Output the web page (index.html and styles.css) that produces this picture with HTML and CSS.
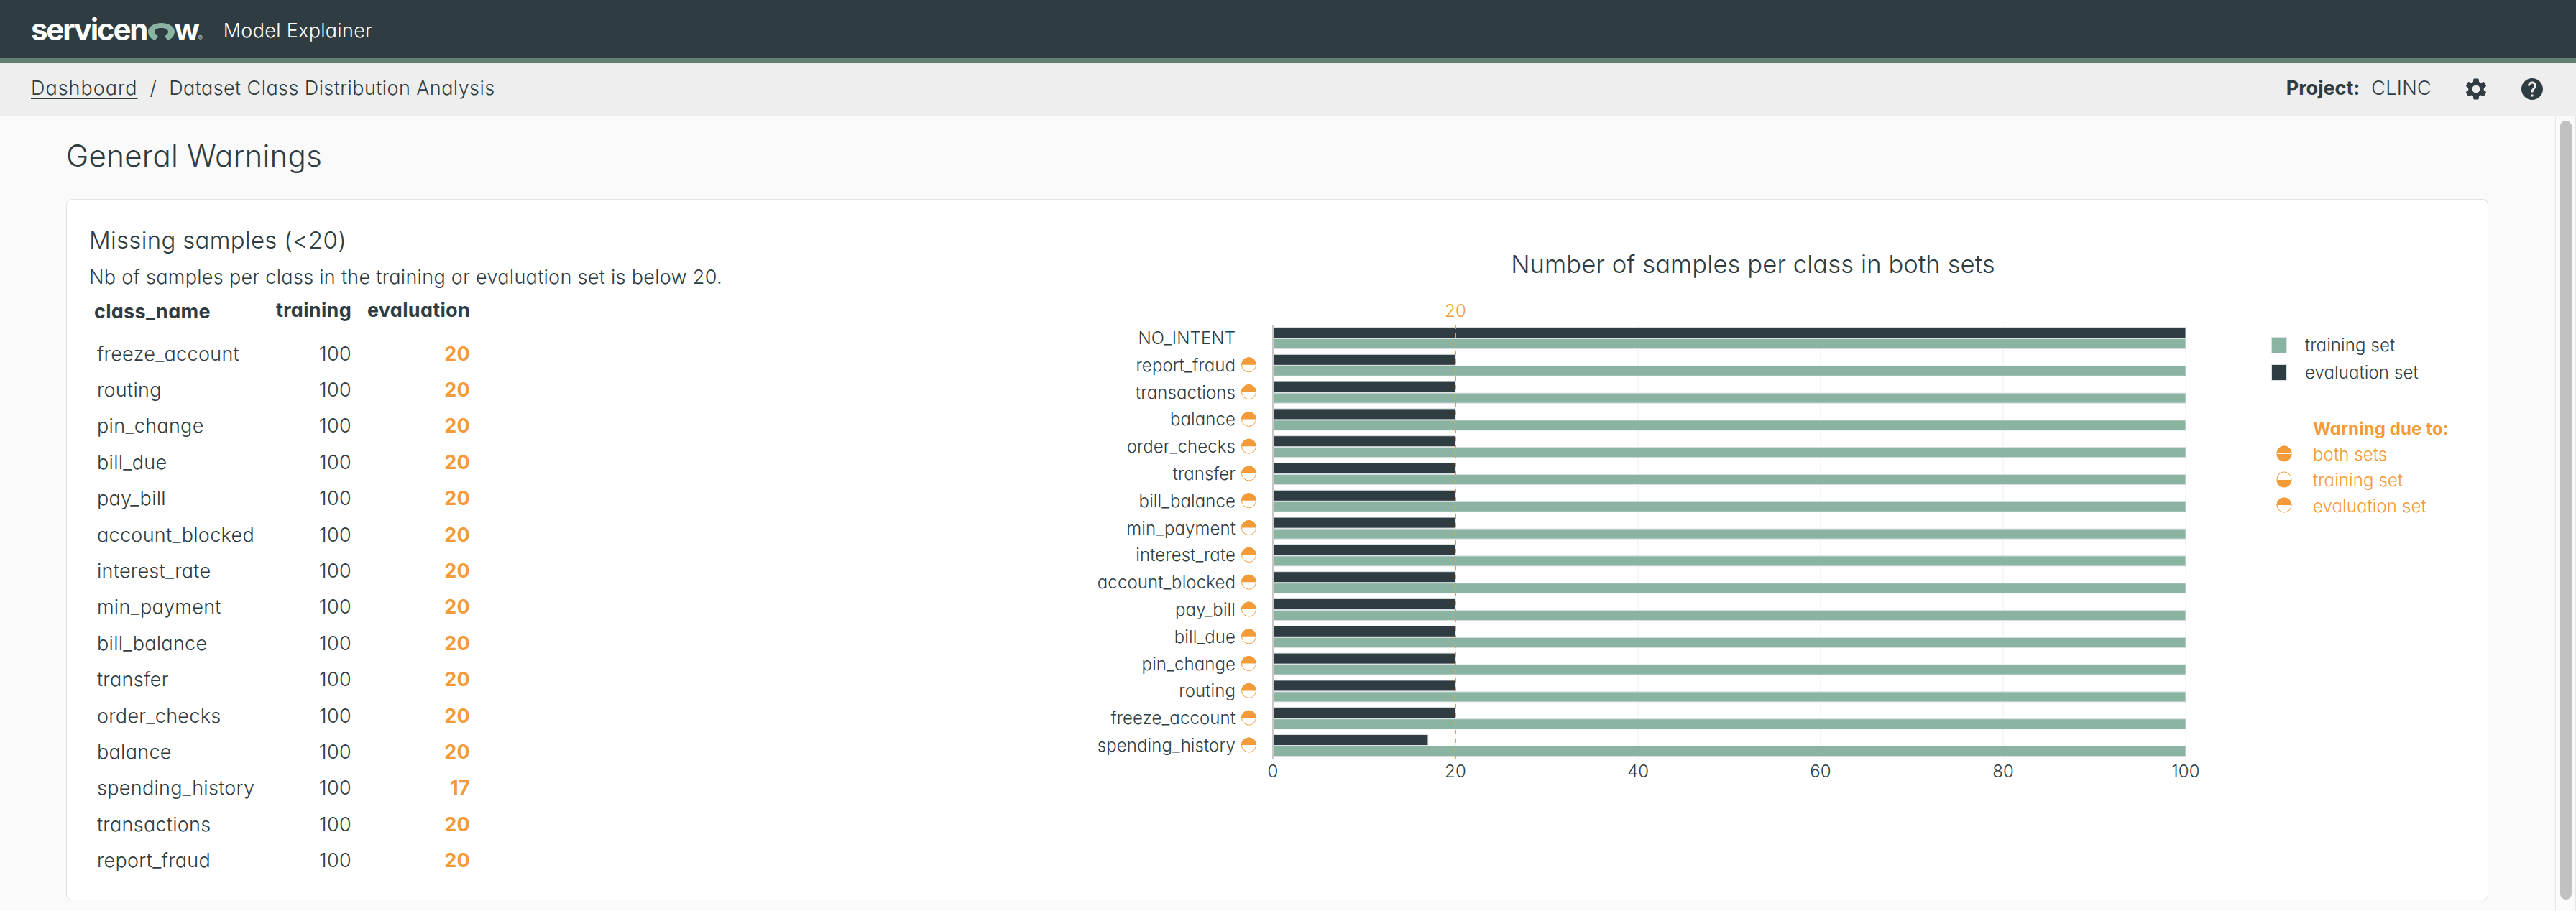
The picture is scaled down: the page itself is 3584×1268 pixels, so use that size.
FILE: index.html
```html
<!DOCTYPE html>
<html lang="en">

<head>
    <meta charset="UTF-8">
    <meta name="viewport" content="width=device-width, initial-scale=1.0">
    <title>Model Explainer</title>
    <link rel="stylesheet" href="styles.css">
</head>

<body>
    <header class="topbar">
        <div class="logo">
            <span>servicen</span>
            <svg class="logo-o" viewBox="0 0 37 24">
                <path d="M10 24C3 22 0 17 0 12 0 5 8 0 18.5 0S37 5 37 12c0 5-3 10-10 12l-4-6c3-1 5-3 5-6 0-3-4-5-9.500-5S9 9 9 12c0 3 2 5 5 6z" />
            </svg>
            <span>w</span>
            <span class="logo-mark">®</span>
        </div>
        <span class="app-name">Model Explainer</span>
    </header>

    <nav class="crumbs">
        <a href="#" class="crumb-link">Dashboard</a>
        <span class="crumb-sep">/</span>
        <span class="crumb-page">Dataset Class Distribution Analysis</span>
        <div class="project">
            <b>Project:</b>
            <span class="project-name">CLINC</span>
            <svg class="icon icon-gear" viewBox="0 0 24 24">
                <path d="M19.14 12.94c.04-.3.06-.61.06-.94 0-.32-.02-.64-.07-.94l2.03-1.58a.49.49 0 0 0 .12-.61l-1.92-3.32a.488.488 0 0 0-.59-.22l-2.39.96c-.5-.38-1.03-.7-1.62-.94l-.36-2.54a.484.484 0 0 0-.48-.41h-3.84c-.24 0-.43.17-.47.41l-.36 2.54c-.59.24-1.13.57-1.62.94l-2.39-.96c-.22-.08-.47 0-.59.22L2.74 8.87c-.12.21-.08.47.12.61l2.03 1.58c-.05.3-.09.63-.09.94s.02.64.07.94l-2.03 1.58a.49.49 0 0 0-.12.61l1.92 3.32c.12.22.37.29.59.22l2.39-.96c.5.38 1.03.7 1.62.94l.36 2.54c.05.24.24.41.48.41h3.84c.24 0 .44-.17.47-.41l.36-2.54c.59-.24 1.13-.56 1.62-.94l2.39.96c.22.08.47 0 .59-.22l1.92-3.32c.12-.22.07-.47-.12-.61l-2.01-1.58zM12 15.6c-1.98 0-3.6-1.62-3.6-3.6s1.62-3.6 3.6-3.6 3.6 1.62 3.6 3.6-1.62 3.6-3.6 3.6z" />
            </svg>
            <svg class="icon" viewBox="0 0 24 24">
                <path d="M12 2C6.48 2 2 6.48 2 12s4.48 10 10 10 10-4.48 10-10S17.52 2 12 2zm1 17h-2v-2h2v2zm2.07-7.75l-.9.92C13.45 12.9 13 13.5 13 15h-2v-.5c0-1.1.45-2.1 1.17-2.83l1.24-1.26c.37-.36.59-.86.59-1.41 0-1.1-.9-2-2-2s-2 .9-2 2H8c0-2.21 1.79-4 4-4s4 1.79 4 4c0 .88-.36 1.68-.93 2.25z" />
            </svg>
        </div>
    </nav>

    <div class="page">
        <main class="content">
            <h1>General Warnings</h1>
            <section class="card">
                <div class="missing">
                    <h2>Missing samples (&lt;20)</h2>
                    <p>Nb of samples per class in the training or evaluation set is below 20.</p>
                    <table id="samplesTable"></table>
                </div>
                <svg id="chart" class="chart" width="2100" height="840"></svg>
            </section>
        </main>
        <div class="scrollbar">
            <div class="scroll-thumb"></div>
        </div>
    </div>

    <script src="script.js"></script>
</body>

</html>
```

FILE: styles.css
```css
* {
    box-sizing: border-box;
}

html,
body {
    height: 100%;
}

body {
    margin: 0;
    display: flex;
    flex-direction: column;
    overflow: hidden;
    font-family: Inter, "Noto Sans", sans-serif;
    font-feature-settings: "cv11";
    font-weight: 300;
    font-size: 27px;
    letter-spacing: 0.3px;
    color: #2f3d42;
    background-color: #fafafa;
}

.topbar {
    height: 88px;
    flex-shrink: 0;
    display: flex;
    align-items: center;
    padding: 0 0 0 43px;
    background-color: #2f3d42;
    border-bottom: 7px solid #637e72;
    color: white;
}

.logo {
    display: flex;
    align-items: baseline;
    font-size: 42px;
    font-weight: 700;
    letter-spacing: -2.2px;
    line-height: 1;
}

.logo-o {
    width: 37px;
    height: 24px;
    margin: 0 -1px 0 2px;
    fill: #8bb3a1;
}

.logo-mark {
    font-size: 9px;
    font-weight: 300;
    letter-spacing: 0;
}

.app-name {
    margin: 4px 0 0 29px;
}

.crumbs {
    height: 74px;
    flex-shrink: 0;
    display: flex;
    align-items: center;
    padding: 0 43px 4px;
    background-color: #eeeeee;
    border-bottom: 1px solid #dddddd;
}

.crumb-link {
    color: #2f3d42;
    letter-spacing: 1px;
    text-underline-offset: 4px;
}

.crumb-sep {
    margin: 0 17px;
}

.crumb-page {
    letter-spacing: 0.42px;
}

.project {
    margin-left: auto;
    display: flex;
    align-items: center;
}

.project b {
    font-weight: 700;
    letter-spacing: 0;
}

.project-name {
    margin-left: 16px;
}

.icon {
    width: 36px;
    height: 36px;
    margin: 3px 0 0 42px;
    fill: #2f3d42;
}

.icon-gear {
    margin-left: 44px;
}

.page {
    flex: 1;
    display: flex;
    min-height: 0;
}

.content {
    flex: 1;
    padding: 0 93px 0 92px;
}

h1 {
    margin: 0;
    height: 115px;
    padding-top: 30px;
    font-size: 42px;
    font-weight: 300;
    line-height: 50px;
}

.card {
    height: 976px;
    display: flex;
    justify-content: space-between;
    padding-left: 31px;
    background-color: white;
    border: 1px solid #e2e2e2;
    border-radius: 8px;
}

.missing {
    padding-top: 36px;
}

h2 {
    margin: 0;
    font-size: 33px;
    font-weight: 300;
    line-height: 40px;
}

.missing p {
    margin: 13px 0 0;
    line-height: 38px;
}

table {
    width: 541px;
    margin-top: 5px;
    table-layout: fixed;
    border-collapse: collapse;
}

th {
    height: 57px;
    padding: 0 11px 13px 0;
    font-weight: 700;
    text-align: right;
    border-bottom: 1px dotted #c4c4c4;
}

th:first-child {
    width: 252px;
    padding: 0 0 9px 7px;
    text-align: left;
}

th:nth-child(2) {
    width: 124px;
}

td {
    height: 50.4px;
    padding: 0 11px 0 0;
    text-align: right;
}

td:first-child {
    padding: 0 0 0 11px;
    text-align: left;
}

.warn {
    font-weight: 700;
    color: #f39b38;
}

.chart {
    display: block;
    flex-shrink: 0;
}

.chart text {
    font-size: 24px;
    letter-spacing: 0.1px;
    fill: #2f3d42;
}

.chart .chart-title {
    font-size: 34.6px;
    text-anchor: middle;
}

.chart .row-label {
    text-anchor: end;
}

.chart .tick-label {
    text-anchor: middle;
}

.chart .orange {
    fill: #f39b38;
}

.chart .legend-head {
    font-weight: 700;
}

.grid {
    stroke: #eeeeee;
}

.axis {
    stroke: #c8c8c8;
    stroke-width: 2;
}

.threshold {
    stroke: #f39b38;
    stroke-width: 2;
    stroke-dasharray: 6 6;
}

.bar-eval,
.bar-train {
    stroke: #d9e0e3;
}

.bar-eval {
    fill: #2f3d42;
}

.bar-train {
    fill: #8bb3a1;
}

.half {
    fill: #f39b38;
}

.half-ring {
    fill: white;
    stroke: #f39b38;
}

.scrollbar {
    width: 29px;
    flex-shrink: 0;
    padding: 6px 5px 0 6px;
    border-left: 1px solid #e6e6e6;
    border-right: 1px solid #e6e6e6;
    background-color: #fafafa;
}

.scroll-thumb {
    width: 16px;
    height: 1084px;
    border-radius: 8px;
    background-color: #c1c1c1;
}
```

FILE: script.js
```js
// rows as they come in the table, evaluation counts are under the threshold
var tableRows = [
    ['freeze_account', 100, 20],
    ['routing', 100, 20],
    ['pin_change', 100, 20],
    ['bill_due', 100, 20],
    ['pay_bill', 100, 20],
    ['account_blocked', 100, 20],
    ['interest_rate', 100, 20],
    ['min_payment', 100, 20],
    ['bill_balance', 100, 20],
    ['transfer', 100, 20],
    ['order_checks', 100, 20],
    ['balance', 100, 20],
    ['spending_history', 100, 17],
    ['transactions', 100, 20],
    ['report_fraud', 100, 20]
];

var chartRows = [
    ['NO_INTENT', 100, 100],
    ['report_fraud', 100, 20],
    ['transactions', 100, 20],
    ['balance', 100, 20],
    ['order_checks', 100, 20],
    ['transfer', 100, 20],
    ['bill_balance', 100, 20],
    ['min_payment', 100, 20],
    ['interest_rate', 100, 20],
    ['account_blocked', 100, 20],
    ['pay_bill', 100, 20],
    ['bill_due', 100, 20],
    ['pin_change', 100, 20],
    ['routing', 100, 20],
    ['freeze_account', 100, 20],
    ['spending_history', 100, 17]
];

function drawTable() {
    var html = '<tr><th>class_name</th><th>training</th><th>evaluation</th></tr>';
    tableRows.forEach(function (row) {
        html += `<tr><td>${row[0]}</td><td>${row[1]}</td><td class="warn">${row[2]}</td></tr>`;
    });
    document.getElementById('samplesTable').innerHTML = html;
}

// half filled circle, top half for evaluation, bottom half for training
function halfCircle(cx, cy, r, side) {
    var ring = `<circle class="half-ring" cx="${cx}" cy="${cy}" r="${r - 0.5}"/>`;
    var top = `<path class="half" d="M${cx - r} ${cy}a${r} ${r} 0 0 1 ${r * 2} 0z"/>`;
    var bottom = `<path class="half" d="M${cx - r} ${cy + 1}a${r} ${r} 0 0 0 ${r * 2} 0z"/>`;
    if (side === 'top') return ring + top;
    if (side === 'bottom') return ring + bottom;
    return ring + top + bottom;
}

function drawChart() {
    var plotX = 410, plotY = 174, plotW = 1270, plotH = 604, band = 37.8;
    var scale = plotW / 100;
    var svg = '';

    svg += `<text class="chart-title" x="1078" y="102">Number of samples per class in both sets</text>`;

    for (var t = 0; t <= 100; t += 20) {
        var gx = plotX + t * scale;
        svg += `<line class="grid" x1="${gx}" y1="${plotY}" x2="${gx}" y2="${plotY + plotH}"/>`;
        svg += `<text class="tick-label" x="${gx}" y="804">${t}</text>`;
    }

    chartRows.forEach(function (row, i) {
        var y = plotY + i * band;
        svg += `<rect class="bar-eval" x="${plotX}" y="${y + 3.5}" width="${row[2] * scale}" height="15"/>`;
        svg += `<rect class="bar-train" x="${plotX}" y="${y + 19.5}" width="${row[1] * scale}" height="14"/>`;
        svg += `<text class="row-label" x="358" y="${y + 27}">${row[0]}</text>`;
        if (i > 0) svg += halfCircle(376.5, y + 18, 10.5, 'top');
    });

    svg += `<line class="axis" x1="${plotX}" y1="${plotY}" x2="${plotX}" y2="${plotY + plotH}"/>`;
    svg += `<line class="threshold" x1="${plotX + 20 * scale}" y1="${plotY}" x2="${plotX + 20 * scale}" y2="${plotY + plotH}"/>`;
    svg += `<text class="tick-label orange" x="${plotX + 20 * scale}" y="163">20</text>`;

    // legend
    svg += `<rect class="bar-train" x="1799.5" y="191.5" width="21" height="22"/>`;
    svg += `<rect class="bar-eval" x="1799.5" y="229.5" width="21" height="22"/>`;
    svg += `<text x="1846" y="211">training set</text>`;
    svg += `<text x="1846" y="249">evaluation set</text>`;
    svg += `<text class="orange legend-head" x="1857" y="327">Warning due to:</text>`;
    svg += `<text class="orange" x="1857" y="363">both sets</text>`;
    svg += `<text class="orange" x="1857" y="399">training set</text>`;
    svg += `<text class="orange" x="1857" y="435">evaluation set</text>`;
    svg += halfCircle(1817, 353, 10.5, 'both');
    svg += halfCircle(1817, 389, 10.5, 'bottom');
    svg += halfCircle(1817, 425, 10.5, 'top');

    document.getElementById('chart').innerHTML = svg;
}

drawTable();
drawChart();
```
